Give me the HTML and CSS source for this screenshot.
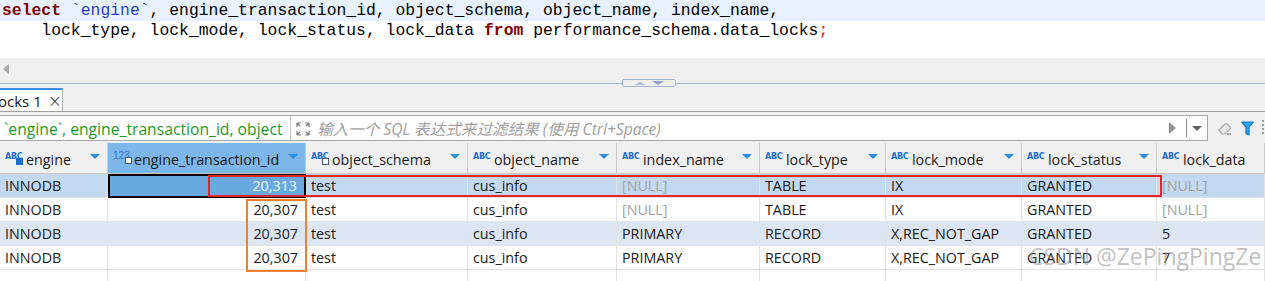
FILE: index.html
```html
<!DOCTYPE html>
<html lang="zh-CN">
<head>
    <meta charset="UTF-8">
    <title>data_locks</title>
    <link rel="stylesheet" href="styles.css">
</head>
<body>
    <!-- Editor SQL -->
    <div class="editor">
        <div class="code-line current"><span class="kw">select</span> <span class="quoted">`engine`</span>, engine_transaction_id, object_schema, object_name, index_name,</div>
        <div class="code-line">    lock_type, lock_mode, lock_status, lock_data <span class="kw">from</span> performance_schema.data_locks<span class="semi">;</span></div>
    </div>

    <div class="hscroll">
        <span class="scroll-left"></span>
    </div>

    <div class="splitter">
        <div class="splitter-handle">
            <span class="tri-up"></span>
            <span class="tri-down"></span>
        </div>
    </div>

    <div class="tab-bar">
        <div class="tab"><span class="tab-title">ocks 1</span><span class="tab-close">×</span></div>
    </div>

    <div class="filter-row">
        <div class="filter-box">
            <div class="filter-history">`engine`, engine_transaction_id, object</div>
            <div class="filter-expand">
                <svg width="14" height="14" viewBox="0 0 14 14">
                    <path d="M1 1h4M1 1v4M1 1l3 3M13 1h-4M13 1v4M13 1l-3 3M1 13h4M1 13v-4M1 13l3-3M13 13h-4M13 13v-4M13 13l-3-3" stroke="#7a7a7a" stroke-width="1.2" fill="none"/>
                </svg>
            </div>
            <div class="filter-input">输入一个 SQL 表达式来过滤结果 (使用 Ctrl+Space)</div>
            <span class="filter-run"></span>
            <span class="filter-sep"></span>
            <span class="filter-drop"></span>
        </div>
        <div class="filter-tools">
            <svg class="eraser" width="16" height="14" viewBox="0 0 16 14">
                <path d="M2 9l6-6a1.5 1.5 0 0 1 2 0l3 3a1.5 1.5 0 0 1 0 2l-5 5H5z" fill="#e8e8e8" stroke="#a8a8a8" stroke-width="1.2"/>
                <path d="M2 9l3 4" stroke="#a8a8a8" stroke-width="1.2"/>
                <path d="M10 13h4" stroke="#808080" stroke-width="1.2"/>
            </svg>
            <svg class="funnel" width="13" height="15" viewBox="0 0 13 15">
                <path d="M0.8 1h11.4l-4.2 5.2v7.8l-3-1.6v-6.2z" fill="#29a8ee" stroke="#1578c8" stroke-width="1.2" stroke-linejoin="round"/>
            </svg>
            <span class="grip"></span>
        </div>
    </div>

    <div class="grid-wrap">
        <div class="grid">
            <div class="hcell"><span class="type">ABC<i class="badge b-s"></i></span>engine<span class="sort"></span></div>
            <div class="hcell active"><span class="type num">123<i class="badge"></i></span>engine_transaction_id<span class="sort"></span></div>
            <div class="hcell"><span class="type">ABC<i class="badge"></i></span>object_schema<span class="sort"></span></div>
            <div class="hcell"><span class="type">ABC</span>object_name<span class="sort"></span></div>
            <div class="hcell"><span class="type">ABC</span>index_name<span class="sort"></span></div>
            <div class="hcell"><span class="type">ABC</span>lock_type<span class="sort"></span></div>
            <div class="hcell"><span class="type">ABC</span>lock_mode<span class="sort"></span></div>
            <div class="hcell"><span class="type">ABC</span>lock_status<span class="sort"></span></div>
            <div class="hcell"><span class="type">ABC</span>lock_data</div>

            <div class="cell sel">INNODB</div>
            <div class="cell num focus">20,313</div>
            <div class="cell sel">test</div>
            <div class="cell sel">cus_info</div>
            <div class="cell sel null">[NULL]</div>
            <div class="cell sel">TABLE</div>
            <div class="cell sel">IX</div>
            <div class="cell sel">GRANTED</div>
            <div class="cell sel null">[NULL]</div>

            <div class="cell">INNODB</div>
            <div class="cell num">20,307</div>
            <div class="cell">test</div>
            <div class="cell">cus_info</div>
            <div class="cell null">[NULL]</div>
            <div class="cell">TABLE</div>
            <div class="cell">IX</div>
            <div class="cell">GRANTED</div>
            <div class="cell null">[NULL]</div>

            <div class="cell alt">INNODB</div>
            <div class="cell alt num">20,307</div>
            <div class="cell alt">test</div>
            <div class="cell alt">cus_info</div>
            <div class="cell alt">PRIMARY</div>
            <div class="cell alt">RECORD</div>
            <div class="cell alt">X,REC_NOT_GAP</div>
            <div class="cell alt">GRANTED</div>
            <div class="cell alt">5</div>

            <div class="cell">INNODB</div>
            <div class="cell num">20,307</div>
            <div class="cell">test</div>
            <div class="cell">cus_info</div>
            <div class="cell">PRIMARY</div>
            <div class="cell">RECORD</div>
            <div class="cell">X,REC_NOT_GAP</div>
            <div class="cell">GRANTED</div>
            <div class="cell">7</div>

            <div class="cell empty"></div>
            <div class="cell empty"></div>
            <div class="cell empty"></div>
            <div class="cell empty"></div>
            <div class="cell empty"></div>
            <div class="cell empty"></div>
            <div class="cell empty"></div>
            <div class="cell empty"></div>
            <div class="cell empty"></div>
        </div>

        <!-- Marcas dibujadas encima -->
        <div class="mark-red"></div>
        <div class="mark-orange"></div>
        <div class="watermark">CSDN @ZePingPingZe</div>
    </div>
</body>
</html>
```

FILE: styles.css
```css
* {
    box-sizing: border-box;
    margin: 0;
    padding: 0;
}

body {
    width: 1265px;
    height: 281px;
    overflow: hidden;
    background-color: #f0f0f0;
    font-family: 'Open Sans', 'Noto Sans CJK SC', sans-serif;
    color: #1a1a1a;
}

/* Editor */
.editor {
    height: 58px;
    background-color: #fff;
    padding-top: 1px;
}

.code-line {
    height: 20px;
    line-height: 20px;
    padding-left: 2px;
    font-family: 'Liberation Mono', monospace;
    font-size: 16.4px;
    white-space: pre;
    color: #000;
}

.code-line.current {
    background-color: #e8f2fe;
    height: 21px;
    margin-top: -1px;
    padding-top: 1px;
}

.kw {
    color: #7f0000;
    font-weight: bold;
}

.quoted {
    color: #2a3cc8;
}

.semi {
    color: #e02020;
}

.hscroll {
    height: 25px;
    position: relative;
}

.scroll-left {
    position: absolute;
    left: 3px;
    top: 6px;
    width: 0;
    height: 0;
    border-top: 5px solid transparent;
    border-bottom: 5px solid transparent;
    border-right: 6px solid #a8a8a8;
}

.splitter {
    height: 1px;
    background-color: #a3b6cd;
    position: relative;
}

.splitter-handle {
    position: absolute;
    left: 622px;
    top: -4px;
    width: 54px;
    height: 8px;
    background-color: #f0f0f0;
    border: 1px solid #a3b6cd;
    border-radius: 2px;
    display: flex;
    justify-content: center;
    align-items: center;
    gap: 6px;
}

.tri-up {
    border-left: 6px solid transparent;
    border-right: 6px solid transparent;
    border-bottom: 3px solid #a9bcd3;
}

.tri-down {
    border-left: 6px solid transparent;
    border-right: 6px solid transparent;
    border-top: 4px solid #8ea6c4;
}

/* Pestaña */
.tab-bar {
    height: 28px;
    padding-top: 4px;
    border-bottom: 1px solid #a0a0a0;
}

.tab {
    width: 63px;
    height: 23px;
    background-color: #fff;
    border-top: 2px solid #3a8ee0;
    border-right: 1px solid #b4b4b4;
    display: flex;
    align-items: center;
    font-size: 15px;
    white-space: nowrap;
    overflow: hidden;
}

.tab-title {
    margin-left: -2px;
}

.tab-close {
    margin-left: 6px;
    font-size: 17px;
    color: #333;
    font-family: 'DejaVu Sans', sans-serif;
    font-weight: 300;
}

/* Filtro */
.filter-row {
    height: 31px;
    display: flex;
    align-items: flex-start;
    padding-top: 3px;
}

.filter-box {
    width: 1208px;
    height: 26px;
    background-color: #fff;
    border: 1px solid #a8a8a8;
    border-left: none;
    display: flex;
    align-items: center;
}

.filter-history {
    width: 291px;
    height: 24px;
    padding-left: 4px;
    color: #1d9a1d;
    font-size: 15.7px;
    line-height: 24px;
    padding-top: 1px;
    white-space: nowrap;
    overflow: hidden;
    border-right: 1px solid #c8c8c8;
}

.filter-expand {
    width: 24px;
    display: flex;
    justify-content: center;
    padding-top: 2px;
}

.filter-input {
    flex-grow: 1;
    color: #a0a0a0;
    font-style: italic;
    font-size: 15.6px;
    padding-left: 2px;
    white-space: nowrap;
}

.filter-run {
    width: 0;
    height: 0;
    border-top: 6px solid transparent;
    border-bottom: 6px solid transparent;
    border-left: 7px solid #909090;
    margin-right: 10px;
}

.filter-sep {
    width: 1px;
    height: 18px;
    background-color: #8a8a8a;
    margin-right: 5px;
}

.filter-drop {
    width: 0;
    height: 0;
    border-left: 5px solid transparent;
    border-right: 5px solid transparent;
    border-top: 5px solid #606060;
    margin-right: 5px;
}

.filter-tools {
    display: flex;
    align-items: center;
    height: 26px;
    padding-left: 9px;
    gap: 8px;
}

.grip {
    width: 2px;
    height: 16px;
    background-image: linear-gradient(#a0a0a0 50%, transparent 50%);
    background-size: 2px 4px;
}

/* Tabla de resultados */
.grid-wrap {
    position: relative;
}

.grid {
    display: grid;
    grid-template-columns: 108px 198px 162px 149px 143px 126px 136px 135px 108px;
    grid-template-rows: 31px repeat(4, 24px) 20px;
    background-color: #fff;
}

.hcell {
    background-color: #f0f0f0;
    border-right: 1px solid #c9c9c9;
    border-bottom: 1px solid #c9c9c9;
    display: flex;
    align-items: center;
    padding-left: 5px;
    padding-top: 2px;
    font-size: 14.3px;
    white-space: nowrap;
    position: relative;
    color: #1a1a1a;
}

.hcell.active {
    background-color: #7db7ea;
}

.type {
    position: relative;
    font-family: 'DejaVu Sans', sans-serif;
    font-size: 8px;
    line-height: 8px;
    font-weight: bold;
    color: #1f6ed0;
    align-self: flex-start;
    margin-top: 8px;
    width: 21px;
    flex-shrink: 0;
    letter-spacing: -0.3px;
}

.type.num {
    font-family: 'Liberation Sans', sans-serif;
    font-size: 10px;
    line-height: 9px;
    font-weight: normal;
    letter-spacing: 0;
    margin-top: 6px;
    color: #3a78c8;
}

.badge {
    position: absolute;
    left: 11px;
    top: 5px;
    width: 7px;
    height: 7px;
    border: 1px solid #4a5a6a;
    background-color: #fff;
}

.type.num .badge {
    left: 12px;
    top: 6px;
}

.badge.b-s {
    border-color: #1f6ed0;
    background-color: #1f6ed0;
}

.sort {
    position: absolute;
    right: 7px;
    top: 11px;
    border-left: 5px solid transparent;
    border-right: 5px solid transparent;
    border-top: 5px solid #2c8ee0;
}

.cell {
    border-right: 1px solid #e3e3e3;
    border-bottom: 1px solid #e3e3e3;
    padding-left: 5px;
    font-size: 14.3px;
    line-height: 23px;
    white-space: nowrap;
    overflow: hidden;
}

.cell.num {
    text-align: right;
    padding-right: 7px;
}

.cell.sel {
    background-color: #c3d9ef;
}

.cell.alt {
    background-color: #dce6f2;
}

.cell.null {
    color: #a3a3a3;
}

.cell.focus {
    background-color: #6aa8e0;
    color: #f4f8fc;
    border: 2px solid #000;
    line-height: 20px;
}

.cell.empty {
    border-bottom: none;
}

.mark-red {
    position: absolute;
    left: 208px;
    top: 32px;
    width: 954px;
    height: 22px;
    border: 2px solid #e3242b;
}

.mark-orange {
    position: absolute;
    left: 246px;
    top: 56px;
    width: 61px;
    height: 73px;
    border: 2px solid #f27f2c;
}

.watermark {
    position: absolute;
    left: 1029px;
    top: 97px;
    font-size: 23px;
    color: rgba(140, 140, 140, 0.55);
    white-space: nowrap;
}
```
